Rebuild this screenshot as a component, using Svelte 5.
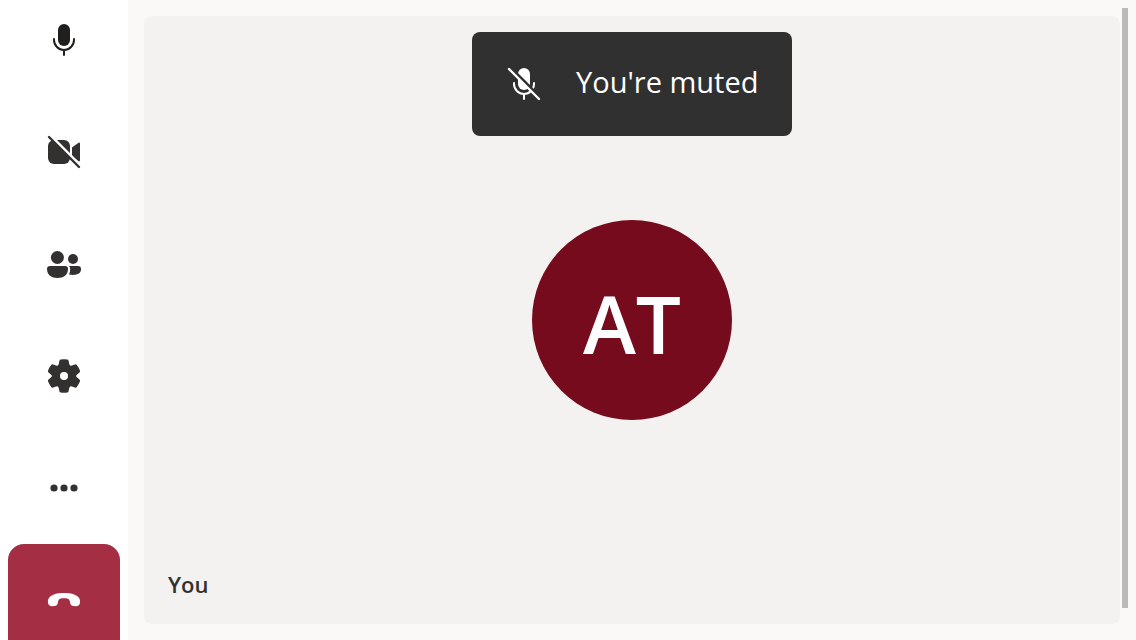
<script>
  let micOn = $state(false);
</script>

<div class="call">
  <nav class="controls" aria-label="Call controls">
    <button class="control mic" aria-label="Microphone" onclick={() => (micOn = !micOn)}>
      <svg viewBox="0 0 40 40" aria-hidden="true">
        <rect x="14" y="4" width="12" height="22" rx="6" />
        <path class="line" d="M10 19v1a10 10 0 0 0 20 0v-1M20 30v5" />
      </svg>
    </button>
    <button class="control" aria-label="Turn camera on">
      <svg viewBox="0 0 40 40" aria-hidden="true">
        <rect x="4" y="8" width="22" height="24" rx="6" />
        <path d="M28 15.5L34.2 10.9Q36 9.8 36 12V28Q36 30.2 34.2 29.1L28 24.5Z" />
        <path class="gap" d="M5.4 2.6L37.6 34.8" />
        <path class="slash" d="M5 5L35 35" />
      </svg>
    </button>
    <button class="control" aria-label="People">
      <svg viewBox="0 0 40 40" aria-hidden="true">
        <circle cx="13.4" cy="13.5" r="6.5" />
        <circle cx="29" cy="15" r="5" />
        <path d="M6 22H21Q24 22 24 25C24 31 19.5 34 13.5 34S3 31 3 25Q3 22 6 22Z" />
        <path d="M25 22H34Q37 22 37 25C37 30 32.5 31.7 25 30.6Q26.2 28.5 26.2 25Q26.2 23 25 22Z" />
      </svg>
    </button>
    <button class="control" aria-label="Settings">
      <svg viewBox="-20 -20 40 40" aria-hidden="true">
        <path
          fill-rule="evenodd"
          d="M0-12A12 12 0 1 1 0 12A12 12 0 1 1 0-12ZM0-4A4 4 0 1 0 0 4A4 4 0 1 0 0-4Z"
        />
        {#each [0, 60, 120, 180, 240, 300] as angle}
          <path
            transform="rotate({angle})"
            d="M-6.2-10.2Q-5.4-11-5.2-12.2L-4.6-15.2Q-4.4-16.3-3.4-16.5Q0-17.1 3.4-16.5Q4.4-16.3 4.6-15.2L5.2-12.2Q5.4-11 6.2-10.2L4-7H-4Z"
          />
        {/each}
      </svg>
    </button>
    <button class="control" aria-label="More options">
      <svg viewBox="0 0 40 40" aria-hidden="true">
        <circle cx="10" cy="20" r="3.6" />
        <circle cx="20" cy="20" r="3.6" />
        <circle cx="30" cy="20" r="3.6" />
      </svg>
    </button>
    <button class="control leave" aria-label="Leave call">
      <svg viewBox="0 0 40 40" aria-hidden="true">
        <path
          d="M20 13C27 13 32 14.5 34.5 17.2C36.2 19 36.4 21.2 35.8 23.6C35.3 25.5 34 26.3 32.2 26.3L29.2 26C27.7 25.8 26.8 25 26.3 23.5L25.7 20.8C25.1 18.8 23.5 18.3 20 18.3S14.9 18.8 14.3 20.8L13.7 23.5C13.2 25 12.3 25.8 10.8 26L7.8 26.3C6 26.3 4.7 25.5 4.2 23.6C3.6 21.2 3.8 19 5.5 17.2C8 14.5 13 13 20 13Z"
        />
      </svg>
    </button>
  </nav>

  <main class="stage">
    <section class="tile" aria-label="Your video">
      {#if !micOn}
        <div class="notice" role="status">
          <svg viewBox="0 0 40 40" aria-hidden="true">
            <rect x="14" y="4" width="12" height="22" rx="6" />
            <path class="line" d="M10 19v1a10 10 0 0 0 20 0v-1M20 30v5" />
            <path class="gap" d="M5.4 2.6L37.6 34.8" />
            <path class="slash" d="M5 5L35 35" />
          </svg>
          <span>You're muted</span>
        </div>
      {/if}
      <div class="avatar">AT</div>
      <div class="name">You</div>
    </section>
  </main>
  <div class="scroll-track" aria-hidden="true"><div class="thumb"></div></div>
</div>

<style>
  :global(body) {
    margin: 0;
    background: #faf9f8;
  }

  .call {
    display: flex;
    height: 100vh;
    overflow: hidden;
    color: #323130;
    font-family: "Segoe UI", "Open Sans", "Noto Sans", sans-serif;
  }

  .controls {
    display: flex;
    flex: none;
    flex-direction: column;
    justify-content: center;
    box-sizing: border-box;
    width: 128px;
    padding: 0 8px;
    overflow: hidden;
    background: #ffffff;
    --surface: #ffffff;
  }

  .control {
    display: flex;
    flex: none;
    align-items: center;
    justify-content: center;
    height: 112px;
    padding: 0;
    border: 0;
    border-radius: 16px;
    background: transparent;
    color: #323130;
    cursor: pointer;
  }

  .mic {
    color: #201f1e;
  }

  .leave {
    background: #a42e43;
    color: #ffffff;
  }

  svg {
    display: block;
    flex: none;
    width: 40px;
    height: 40px;
    fill: currentColor;
  }

  .line,
  .slash,
  .gap {
    fill: none;
    stroke: currentColor;
    stroke-width: 2;
    stroke-linecap: round;
  }

  .slash {
    stroke-width: 2.4;
  }

  .gap {
    stroke: var(--surface);
    stroke-width: 3;
    stroke-linecap: butt;
  }

  .stage {
    display: flex;
    flex: 1;
    min-width: 0;
    padding: 16px 0 16px 16px;
  }

  .tile {
    display: grid;
    flex: 1;
    grid-template-rows: 1fr auto 1fr;
    justify-items: center;
    box-sizing: border-box;
    padding: 16px 24px;
    border-radius: 8px;
    background: #f3f2f1;
  }

  .notice {
    display: flex;
    grid-row: 1;
    align-items: center;
    align-self: start;
    gap: 32px;
    box-sizing: border-box;
    min-width: 320px;
    height: 104px;
    padding: 0 32px;
    border-radius: 8px;
    background: #303030;
    color: #ffffff;
    font-size: 29px;
    line-height: 40px;
    white-space: nowrap;
    --surface: #303030;
  }

  .notice span {
    padding-bottom: 4px;
  }

  .avatar {
    display: flex;
    grid-row: 2;
    align-items: center;
    justify-content: center;
    box-sizing: border-box;
    width: 200px;
    height: 200px;
    padding-top: 4px;
    border-radius: 50%;
    background: #750b1c;
    color: #ffffff;
    font-size: 80px;
    font-weight: 600;
  }

  .name {
    grid-row: 3;
    align-self: end;
    justify-self: start;
    padding-bottom: 8px;
    font-size: 22px;
    font-weight: 600;
    line-height: 32px;
  }

  .scroll-track {
    flex: none;
    box-sizing: border-box;
    width: 16px;
    padding: 8px 8px 32px 2px;
  }

  .thumb {
    height: 100%;
    background: #bbbab9;
  }
</style>
